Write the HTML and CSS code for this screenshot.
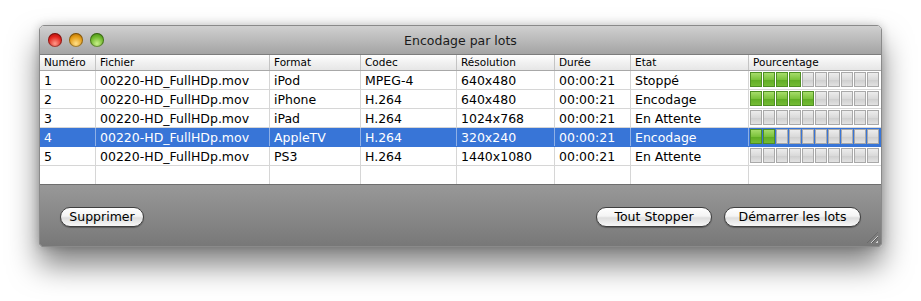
FILE: index.html
```html
<!DOCTYPE html>
<html lang="fr">
<head>
  <meta charset="UTF-8">
  <title>Encodage par lots</title>
  <link rel="stylesheet" href="styles.css">
</head>
<body>

  <div class="window">
    <div class="titlebar">
      <div class="lights">
        <span class="light red"></span>
        <span class="light orange"></span>
        <span class="light green"></span>
      </div>
      <div class="title">Encodage par lots</div>
    </div>

    <div class="list">
      <div class="row head">
        <div>Numéro</div><div>Fichier</div><div>Format</div><div>Codec</div>
        <div>Résolution</div><div>Durée</div><div>Etat</div><div>Pourcentage</div>
      </div>
      <div id="rows"></div>
      <div class="row empty">
        <div></div><div></div><div></div><div></div><div></div><div></div><div></div><div></div>
      </div>
    </div>

    <div class="bottom">
      <button class="pill del">Supprimer</button>
      <div class="spacer"></div>
      <button class="pill stop">Tout Stopper</button>
      <button class="pill start">Démarrer les lots</button>
      <span class="grip"></span>
    </div>
  </div>

  <script>
    const jobs = [
      [1, "iPod", "MPEG-4", "640x480", "Stoppé", 4],
      [2, "iPhone", "H.264", "640x480", "Encodage", 5],
      [3, "iPad", "H.264", "1024x768", "En Attente", 0],
      [4, "AppleTV", "H.264", "320x240", "Encodage", 2],
      [5, "PS3", "H.264", "1440x1080", "En Attente", 0]
    ];

    const rows = document.getElementById("rows");
    jobs.forEach(j => {
      let bar = "";
      for (let i = 0; i < 10; i++) {
        bar += `<span class="seg${i < j[5] ? " on" : ""}"></span>`;
      }
      rows.innerHTML += `
        <div class="row${j[0] === 4 ? " sel" : ""}">
          <div>${j[0]}</div><div>00220-HD_FullHDp.mov</div><div>${j[1]}</div><div>${j[2]}</div>
          <div>${j[3]}</div><div>00:00:21</div><div>${j[4]}</div><div class="bar">${bar}</div>
        </div>`;
    });
  </script>

</body>
</html>
```

FILE: styles.css
```css
body {
  margin: 0;
  min-height: 301px;
  background: #fff;
  font-family: "DejaVu Sans", "Liberation Sans", sans-serif;
}

.window {
  width: 841px;
  margin: 25px 0 0 39px;
  border: 1px solid #8a8a8a;
  border-radius: 5px 5px 3px 3px;
  overflow: hidden;
  box-shadow: 0 18px 30px rgba(0,0,0,0.5), 0 0 10px rgba(0,0,0,0.2);
}

.titlebar {
  height: 28px;
  display: flex;
  align-items: center;
  position: relative;
  background: linear-gradient(#d0d0d0, #a4a4a4);
  border-bottom: 1px solid #7d7d7d;
}

.lights {
  display: flex;
  gap: 7px;
  padding-left: 8px;
}

.light {
  width: 14px;
  height: 14px;
  border-radius: 50%;
  box-shadow: inset 0 0 0 1px rgba(0,0,0,0.35);
}

.red { background: radial-gradient(circle at 50% 75%, #ff9a8a, #e0231c 55%, #9b0a06); }
.orange { background: radial-gradient(circle at 50% 75%, #ffe08a, #e39b16 55%, #9a5a00); }
.green { background: radial-gradient(circle at 50% 75%, #c9f08a, #6cb62a 55%, #3a7a0c); }

.title {
  position: absolute;
  left: 0;
  right: 0;
  text-align: center;
  font-size: 12.5px;
  color: #1a1a1a;
  pointer-events: none;
}

.list {
  background: #fff;
}

.row {
  display: grid;
  grid-template-columns: 56px 174px 91px 96px 98px 76px 118px 132px;
  height: 18px;
  border-bottom: 1px solid #d6d6d6;
  font-size: 12.5px;
  line-height: 19px;
  color: #000;
}

.row > div {
  border-right: 1px solid #d6d6d6;
  padding-left: 4px;
  white-space: nowrap;
  overflow: hidden;
}

.row > div:last-child {
  border-right: none;
}

.row.head {
  height: 15px;
  line-height: 15px;
  font-size: 10.5px;
  background: linear-gradient(#ffffff, #f1f1f1 50%, #e6e6e6);
  border-bottom: 1px solid #a8a8a8;
}

.row.head > div {
  border-right-color: #c4c4c4;
}

.row.sel {
  background: #3875d7;
  color: #fff;
  border-bottom-color: #3875d7;
}

.row.sel > div {
  border-right-color: #8fb0e6;
}

.row.empty {
  border-bottom: none;
}

.row > .bar {
  display: flex;
  gap: 1px;
  padding: 1px 0 0 1px;
}

.seg {
  width: 10px;
  height: 13px;
  border: 1px solid #a9a9a9;
  background: linear-gradient(#ececec, #dadada 50%, #cfcfcf 55%, #e2e2e2);
}

.seg.on {
  border-color: #4f8f23;
  background: linear-gradient(#a6dc6a, #7cc33c 50%, #61ad25 55%, #74bc34);
}

.bottom {
  height: 61px;
  display: flex;
  align-items: center;
  gap: 12px;
  padding: 0 20px;
  position: relative;
  background: linear-gradient(#989898, #787878);
  border-top: 1px solid #6e6e6e;
}

.spacer {
  flex: 1;
}

.pill {
  height: 20px;
  padding: 0;
  margin-top: 2px;
  border: 1px solid #3f3f3f;
  border-radius: 10px;
  background: linear-gradient(#ffffff, #f4f4f4 45%, #dedede 55%, #f8f8f8);
  box-shadow: 0 1px 1px rgba(0,0,0,0.3);
  font-family: "DejaVu Sans", "Liberation Sans", sans-serif;
  font-size: 12.5px;
  line-height: 17px;
  color: #000;
}

.del { width: 84px; }
.stop { width: 116px; }
.start { width: 137px; }

.grip {
  position: absolute;
  right: 3px;
  bottom: 3px;
  width: 11px;
  height: 11px;
  background: repeating-linear-gradient(135deg, transparent 0 2px, #cfcfcf 2px 3px, #5a5a5a 3px 4px);
  clip-path: polygon(100% 0, 100% 100%, 0 100%);
}
```
